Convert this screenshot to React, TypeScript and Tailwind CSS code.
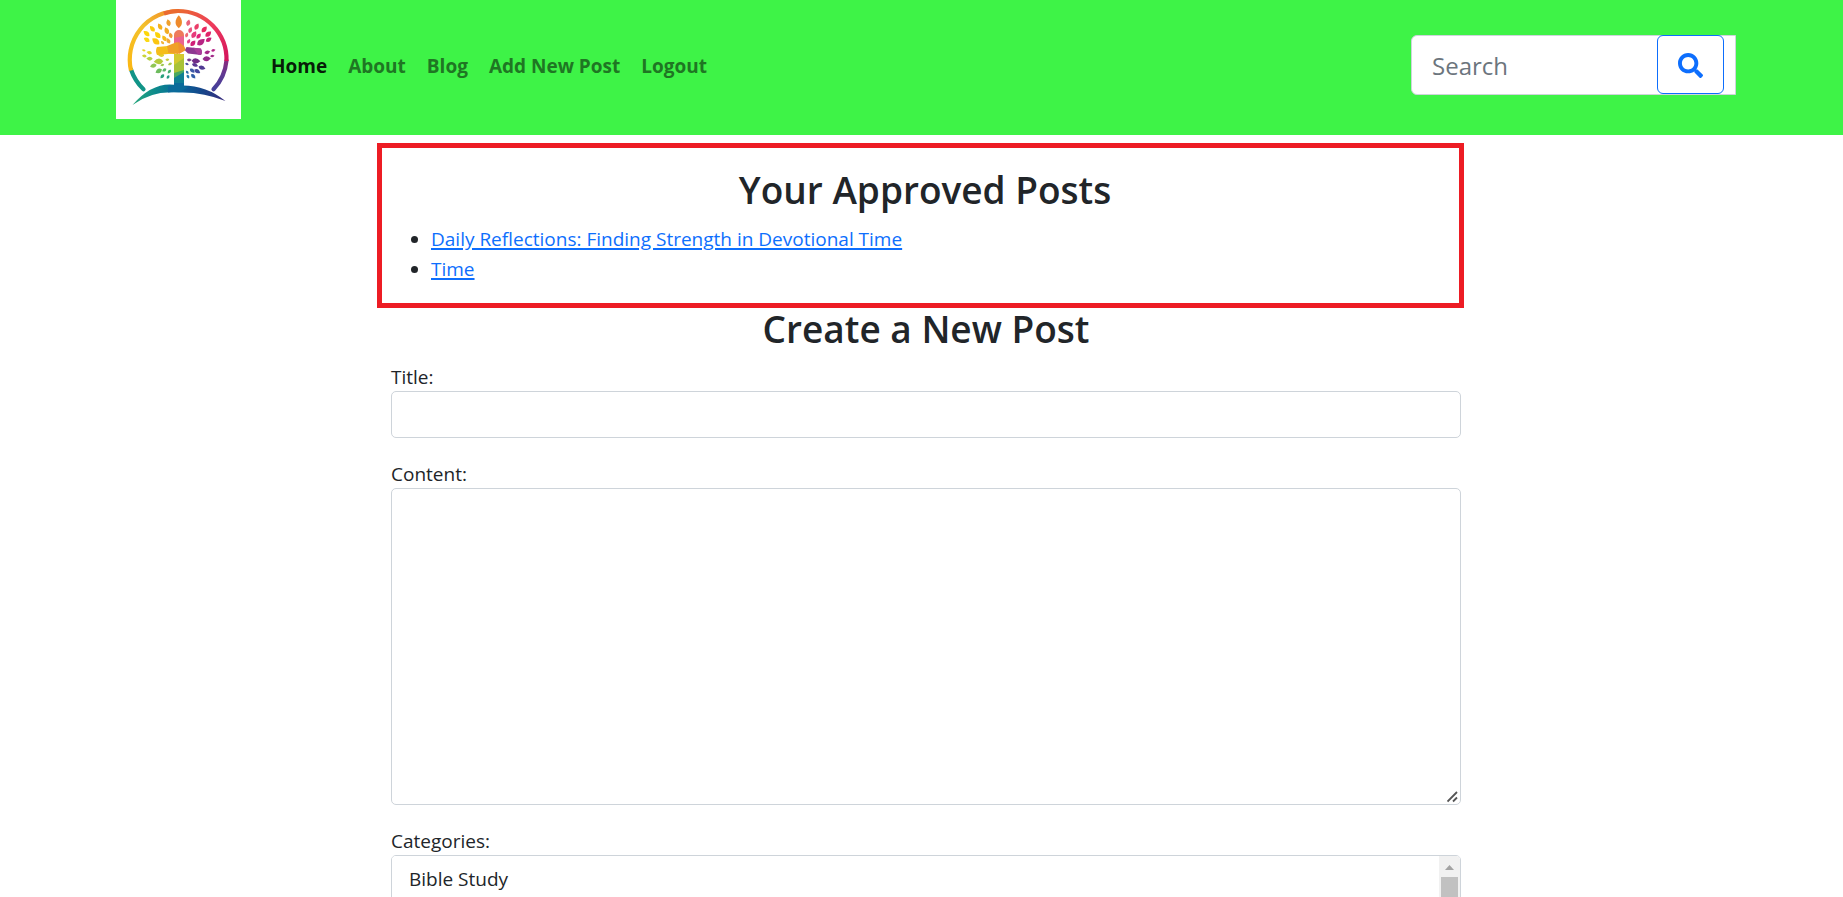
import React from 'react';
import { FaSearch } from 'react-icons/fa';

type Leaf = [x: number, y: number, length: number, color: string];

const leaves: Leaf[] = [
  [52.5, 22.7, 3.6, '#f0a02c'], [44, 26.7, 3.6, '#f3b01c'], [50.7, 30.7, 3.8, '#f2ab24'],
  [36.3, 28.7, 3.6, '#fbc90c'], [54.7, 35.3, 3, '#ef9a3a'], [30.5, 33.5, 3.8, '#fcd60a'],
  [41.7, 35, 4, '#fbd20a'], [48.3, 38.3, 3.4, '#f5bb18'], [30.7, 39.7, 3.4, '#fbd916'],
  [39.8, 41.3, 4.6, '#fbc611'], [46.5, 42.5, 2.2, '#f0b43a'], [52.3, 40.7, 3.2, '#f2a93a'],
  [27.7, 50.3, 2, '#e9d429'], [33.3, 52.7, 2.8, '#e3d62c'], [28.3, 56, 2.4, '#c9d436'],
  [33.5, 58.7, 3.2, '#b4cf45'], [44.7, 54.7, 3.6, '#ddd02f'], [42.5, 61.5, 4.8, '#b5cb3c'],
  [51.3, 59.7, 2, '#c6cb3c'], [37.3, 65.7, 3.4, '#8fc655'], [46.3, 65, 2, '#9ec851'],
  [54, 64, 2.2, '#a8c94c'], [42.7, 71, 3.6, '#6dbb5d'], [48.3, 70, 2.4, '#5db767'],
  [53.3, 71.7, 2.4, '#46ad6d'], [46.3, 76.3, 2.6, '#28a07c'], [52, 77, 2.2, '#239b82'],
  [72.3, 22.7, 3.4, '#e9627a'], [80.7, 26.7, 3.6, '#ea3d68'], [74.3, 30, 3.2, '#ec5580'],
  [88.3, 29.3, 3.8, '#e8285f'], [78, 34.7, 4, '#e63c7c'], [70.7, 35, 2.6, '#ee6a75'],
  [82.7, 36, 3.2, '#e2257a'], [92.3, 34, 3.8, '#e02468'], [85, 42, 4.8, '#b62583'],
  [92.7, 39.7, 3.4, '#c91f79'], [77, 43.3, 3.6, '#d01d78'], [72.7, 41.3, 2.6, '#e0438c'],
  [97.3, 50.3, 2.2, '#b42486'], [91.3, 52.3, 3, '#a52888'], [96.3, 56, 2.2, '#a12a88'],
  [90.7, 58.7, 4.2, '#922a8a'], [80, 61, 4.4, '#722d87'], [73.3, 60, 2.4, '#7b3d91'],
  [86, 67.7, 3.6, '#4f3b92'], [79, 65, 3.2, '#5b3791'], [71, 64, 2, '#49569f'],
  [81.3, 71.3, 3.4, '#4548a0'], [76.3, 70.7, 3, '#3c58a6'], [71.3, 72.3, 2, '#2b6ba9'],
  [77.3, 76.3, 3, '#305ea7'], [72, 76.7, 2.2, '#2378ac'],
];

function Logo() {
  return (
    <svg viewBox="0 0 125 119" className="h-[119px] w-[125px] bg-white" role="img" aria-label="Site logo">
      <defs>
        <linearGradient id="ring-left" x1="0" y1="1" x2="1" y2="0">
          <stop offset="0" stopColor="#fbb713" />
          <stop offset="0.5" stopColor="#f3c22c" />
          <stop offset="1" stopColor="#f1862b" />
        </linearGradient>
        <linearGradient id="ring-right" x1="0" y1="0" x2="1" y2="1">
          <stop offset="0" stopColor="#ea6a30" />
          <stop offset="0.5" stopColor="#ee3a5c" />
          <stop offset="1" stopColor="#d3145c" />
        </linearGradient>
        <linearGradient id="ring-end" x1="0" y1="0" x2="0" y2="1">
          <stop offset="0" stopColor="#8a2a7e" />
          <stop offset="0.5" stopColor="#5f3a93" />
          <stop offset="1" stopColor="#44409a" />
        </linearGradient>
        <linearGradient id="ground" x1="0" y1="0" x2="1" y2="0">
          <stop offset="0" stopColor="#28a87c" />
          <stop offset="0.25" stopColor="#0d8a8c" />
          <stop offset="0.5" stopColor="#08679a" />
          <stop offset="0.75" stopColor="#16468a" />
          <stop offset="1" stopColor="#3b2a7c" />
        </linearGradient>
      </defs>
      <g fill="none" strokeWidth="4.2">
        <path d="M15 69.500A48.500 48.500 0 0 0 27.500 89.300" stroke="#119487" strokeLinecap="round" />
        <path d="M110.500 60.500A48.500 48.500 0 0 1 97.500 89.300" stroke="url(#ring-end)" strokeLinecap="round" />
        <path d="M15 70.500A48.500 48.500 0 0 1 62 11" stroke="url(#ring-left)" />
        <path d="M48 13.500A48.500 48.500 0 0 1 62 11" stroke="#ea6a30" />
        <path d="M61.500 11A48.500 48.500 0 0 1 110.500 61" stroke="url(#ring-right)" />
      </g>
      {leaves.map(([x, y, r, color]) => {
        const angle = (Math.atan2(y - 60, x - 62.7) * 180) / Math.PI;
        const w = r * 0.8;
        return (
          <path
            key={`${x}-${y}`}
            d={`M${-r} 0Q${-r * 0.2} ${-w * 1.5} ${r} 0Q${-r * 0.2} ${w * 1.5} ${-r} 0Z`}
            transform={`translate(${x} ${y}) rotate(${angle})`}
            fill={color}
          />
        );
      })}
      <path d="M62.800 15.300C67 20 67 25 62.800 28.200C58.500 25 58.500 20 62.800 15.300Z" fill="#ee8a2c" />
      <path d="M58 48V35a5 5 0 0 1 10 0v5l-5 2z" fill="#ee7a5c" />
      <path d="M58 38l10-2v14H58z" fill="#ea6390" />
      <path d="M58 54h10v17l-10 4z" fill="#d3c92e" />
      <path d="M58 65l10-7v13l-10 3z" fill="#a8c238" />
      <path d="M58 73l10-3v8l-10 2z" fill="#4aa860" />
      <path d="M58 78l10-6v17H58z" fill="#0f7f93" />
      <path d="M41 47l11-1v8l-11 1q-2-4 0-8z" fill="#f5bd1a" />
      <path d="M50 46.500l9-.5v8h-7z" fill="#f1cf1c" />
      <path d="M51 46l10-4 8 8-7 4-10-1z" fill="#f0a028" />
      <path d="M62 41.500l6 4.500 2 4-7 4z" fill="#f0922e" />
      <path d="M69 50.500l1.500-3.500 14 1.500q2.500 3.500.5 6.500l-13-1.500z" fill="#8d3791" />
      <path d="M77 47.700l8 .8q2 3.500 0 6.500l-3-.4z" fill="#a93c9a" />
      <path d="M16.500 105Q38 80 62.500 85.500Q89 84 109.500 101Q86 91.500 62.500 92.500Q36 90 16.500 105Z" fill="url(#ground)" />
      <path d="M52 86.500l6-.8V83h10v3l4 1.500-8 4-12 1z" fill="#0b6b9a" />
    </svg>
  );
}

const links = ['Home', 'About', 'Blog', 'Add New Post', 'Logout'];
const posts = ['Daily Reflections: Finding Strength in Devotional Time', 'Time'];
const categories = ['Bible Study', 'Prayer', 'Devotional', 'Worship', 'Family', 'Youth', 'Missions', 'Testimony'];

const field = 'block w-full rounded-[5px] border border-[#ced4da] bg-white px-[15px] outline-none focus:border-[#86b7fe]';
const heading = 'mb-[13px] text-center text-[37px] font-semibold leading-[42px]';
const fieldLabel = 'block leading-[28px]';

export default function App() {
  return (
    <div className="min-h-screen bg-white font-['Open_Sans','Noto_Sans',sans-serif] text-[19px] leading-[30px] text-[#212529]">
      <header className="bg-[#3ef347] pl-[9px]">
        <div className="mx-auto flex h-[135px] max-w-[1620px] items-start justify-between">
          <div className="flex items-start">
            <a href="#home" className="shrink-0">
              <Logo />
            </a>
            <nav className="ml-[30px] mt-[51px] flex gap-[21px] font-bold">
              {links.map((label, i) => (
                <a key={label} href="#" className={i === 0 ? 'text-black/90' : 'text-[#1f7623]'}>
                  {label}
                </a>
              ))}
            </nav>
          </div>
          <form role="search" className="mt-[35px] flex h-[60px] w-[325px] rounded-l-[6px] border border-[#ced4da] bg-white pr-[11px]">
            <input
              type="search"
              aria-label="Search"
              placeholder="Search"
              className="min-w-0 flex-1 bg-transparent pl-5 pt-0.5 text-[24px] outline-none placeholder:text-[#6c757d]"
            />
            <button
              type="button"
              aria-label="Submit search"
              className="-mt-px flex h-[59px] w-[67px] items-center justify-center rounded-[6px] border border-[#0d6efd] bg-white pt-0.5 text-[25px] text-[#0d6efd]"
            >
              <FaSearch />
            </button>
          </form>
        </div>
      </header>

      <main className="pl-[9px] pt-2">
        <div className="mx-auto max-w-[1070px]">
          <section className="-ml-[14px] -mr-[3px] border-[5px] border-[#ed1c24] pb-[19px] pl-[9px] pt-[21px]">
            <h2 className={heading}>Your Approved Posts</h2>
            <ul className="list-disc pl-10">
              {posts.map((title) => (
                <li key={title}>
                  <a href="#" className="text-[#0d6efd] underline decoration-2 underline-offset-2">
                    {title}
                  </a>
                </li>
              ))}
            </ul>
          </section>

          <h2 className={heading}>Create a New Post</h2>
          <form className="flex flex-col gap-[22px]">
            <div>
              <label htmlFor="title" className={fieldLabel}>Title:</label>
              <input id="title" type="text" className={`${field} h-[47px]`} />
            </div>
            <div>
              <label htmlFor="content" className={fieldLabel}>Content:</label>
              <div className="relative">
                <textarea id="content" className={`${field} h-[317px] resize-y py-[7px]`} />
                <svg
                  viewBox="0 0 12 12"
                  className="pointer-events-none absolute bottom-0.5 right-0.5 size-3 bg-white"
                  stroke="#555"
                  strokeWidth="1.8"
                  aria-hidden="true"
                >
                  <path d="M0.500 10.500L10 1M6 10.500L10 6.500" />
                </svg>
              </div>
            </div>
            <div>
              <label htmlFor="categories" className={fieldLabel}>Categories:</label>
              <div className="relative">
                <select
                  id="categories"
                  multiple
                  size={4}
                  className={`${field} h-[130px] overflow-y-scroll py-[7px]`}
                >
                  {categories.map((name) => (
                    <option key={name} className="px-[2px] pb-1 pt-[3px]">{name}</option>
                  ))}
                </select>
                <div
                  className="pointer-events-none absolute inset-y-px right-px flex w-[21px] flex-col rounded-r-[4px] bg-[#f1f1f1] pl-0.5 pr-0.5"
                  aria-hidden="true"
                >
                  <svg viewBox="0 0 17 21" className="h-[21px] w-full" fill="#a3a3a3">
                    <path d="M4 14L8.500 9L13 14Z" />
                  </svg>
                  <div className="h-14 bg-[#c1c1c1]" />
                </div>
              </div>
            </div>
          </form>
        </div>
      </main>
    </div>
  );
}
